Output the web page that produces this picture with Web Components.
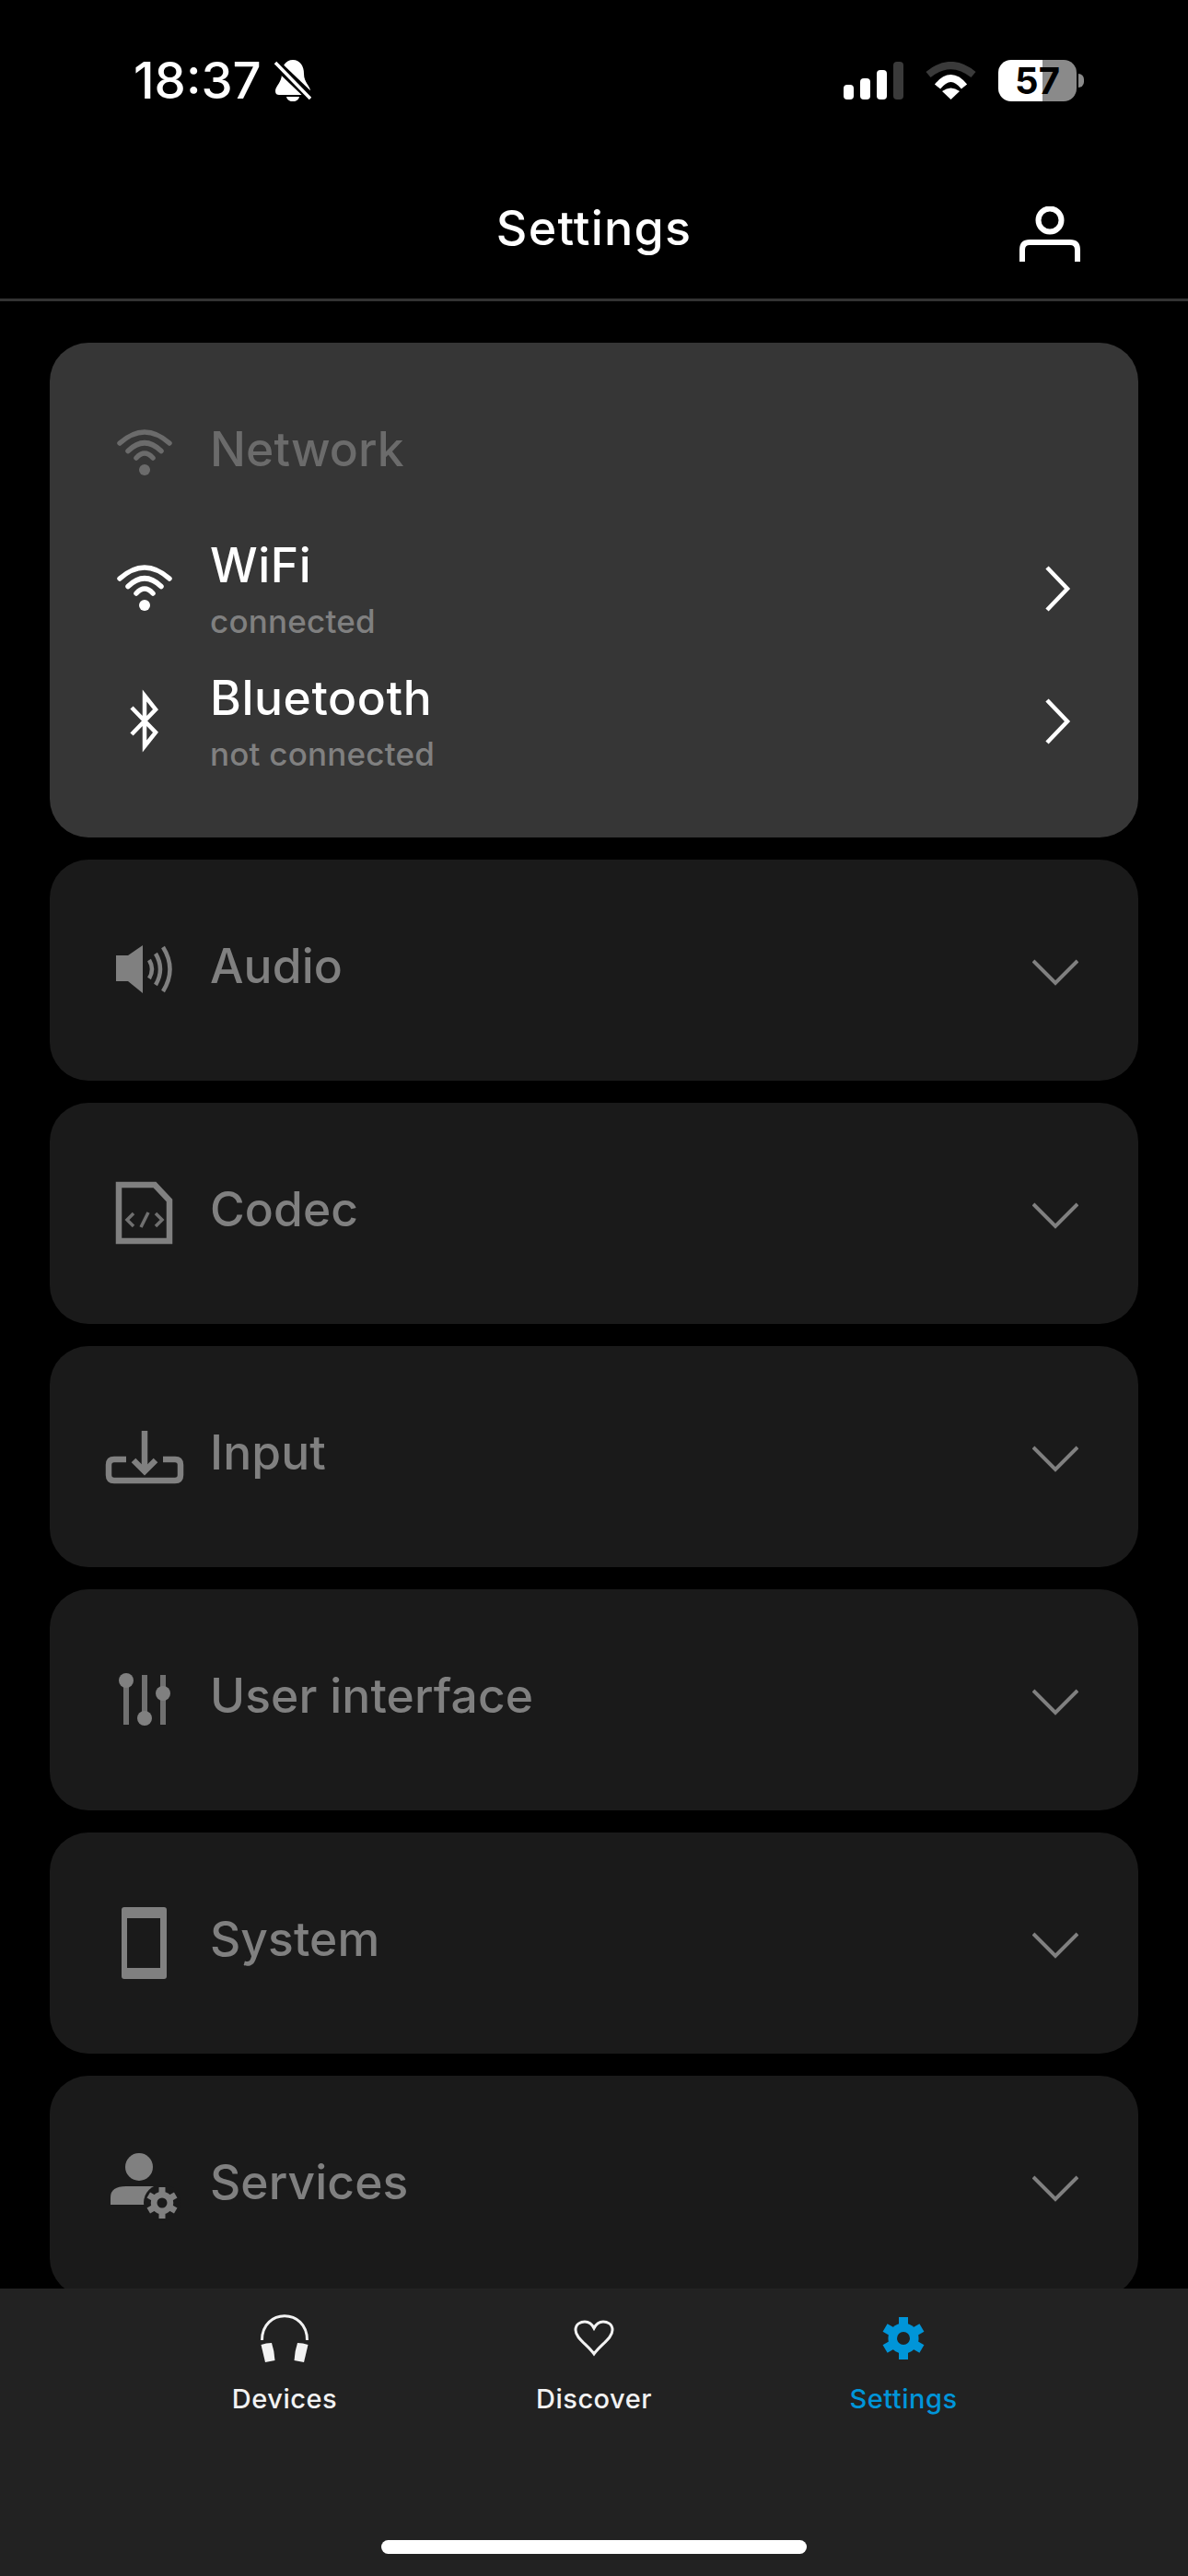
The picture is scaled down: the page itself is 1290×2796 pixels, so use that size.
<!DOCTYPE html>
<html lang="en">
<head>
<meta charset="utf-8">
<title>Settings</title>
<style>
  html, body { margin: 0; background: #000; }
  body { width: 1290px; height: 2796px; overflow: hidden; position: relative; font-family: Inter, "Noto Sans", sans-serif; color: #fff; }
</style>
</head>
<body>

<status-bar></status-bar>
<app-header>Settings</app-header>

<settings-list>
  <settings-card label="Network" open icon="wifi">
    <settings-row title="WiFi" status="connected" icon="wifi"></settings-row>
    <settings-row title="Bluetooth" status="not connected" icon="bluetooth"></settings-row>
  </settings-card>
  <settings-card label="Audio" icon="audio"></settings-card>
  <settings-card label="Codec" icon="codec"></settings-card>
  <settings-card label="Input" icon="input"></settings-card>
  <settings-card label="User interface" icon="sliders"></settings-card>
  <settings-card label="System" icon="system"></settings-card>
  <settings-card label="Services" icon="services"></settings-card>
</settings-list>

<tab-bar>
  <tab-item label="Devices" icon="headphones"></tab-item>
  <tab-item label="Discover" icon="heart"></tab-item>
  <tab-item label="Settings" icon="gear" active></tab-item>
</tab-bar>

<script>
  // gear: six teeth through a ring, hole on top in the colour behind it
  const gear = (x, y, tooth, toothW, hole, holeFill) => `
    <g transform="translate(${x} ${y})" fill="currentColor">
      <circle r="${tooth * 0.72}"/>
      <rect x="${-toothW / 2}" y="${-tooth}" width="${toothW}" height="${tooth * 2}"/>
      <rect x="${-toothW / 2}" y="${-tooth}" width="${toothW}" height="${tooth * 2}" transform="rotate(60)"/>
      <rect x="${-toothW / 2}" y="${-tooth}" width="${toothW}" height="${tooth * 2}" transform="rotate(120)"/>
      <circle r="${hole}" fill="${holeFill}"/>
    </g>`

  // all of these are drawn in a 100x100 box
  const ICONS = {
    wifi: `<g fill="none" stroke="currentColor" stroke-width="5.5" stroke-linecap="round">
        <path d="M23 39Q50 15 77 39"/><path d="M32 47.5Q50 30 68 47.5"/><path d="M41 55Q50 45 59 55"/></g>
        <circle cx="50" cy="68" r="6" fill="currentColor"/>`,
    bluetooth: `<path d="M36 35L62 62L50 77V22L62 37L36 64" fill="none" stroke="currentColor" stroke-width="4.5"/>`,
    audio: `<path d="M19 34H32L48 23V75L32 62H19Z" fill="currentColor"/>
        <g fill="none" stroke="currentColor" stroke-width="4.5">
        <path d="M55 39Q61 49 55 59"/><path d="M62 32Q72 49 62 66"/><path d="M70 25Q85 49 70 73"/></g>`,
    codec: `<path d="M22 19H61L77 36V80H22Z" fill="none" stroke="currentColor" stroke-width="6.5"/>
        <g fill="none" stroke="currentColor" stroke-width="3.5" opacity=".85">
        <path d="M38 50L31 57L38 64"/><path d="M62 50L69 57L62 64"/><path d="M54 49L46 65"/></g>`,
    input: `<g fill="none" stroke="currentColor" stroke-width="6.5">
        <path d="M30 53H17Q11 53 11 59V70Q11 76 17 76H83Q89 76 89 70V59Q89 53 83 53H70"/>
        <path d="M50 22V64"/><path d="M38 54L50 66L62 54"/></g>`,
    sliders: `<g stroke="currentColor" stroke-width="6" opacity=".85"><path d="M30 23V77M50 23V77M70 23V77"/></g>
        <g fill="currentColor"><circle cx="30" cy="29" r="8"/><circle cx="50" cy="70" r="8"/><circle cx="70" cy="43" r="8"/></g>`,
    system: `<path fill-rule="evenodd" fill="currentColor" d="M28 11H71Q74 11 74 14V86Q74 89 71 89H28Q25 89 25 86V14Q25 11 28 11ZM31 23V77H67V23Z"/>`,
    services: `<g fill="currentColor"><circle cx="44" cy="29" r="15"/>
        <path d="M13 70V62Q13 50 30 50H58Q66 50 66 56V70Z"/></g>
        <circle cx="69" cy="68" r="20" fill="#1a1a1a"/>${gear(69, 68, 17, 7, 5.5, '#1a1a1a')}`,
  }

  const TAB_ICONS = {
    headphones: `<svg width="54" height="52" viewBox="0 0 54 52" fill="#f2f2f2">
        <path d="M2.5 28C2.5-7 51.500-7 51.500 28" fill="none" stroke="#f2f2f2" stroke-width="3"/>
        <path d="M1.500 33Q7 31 13 31Q16 40 16.500 50L6 52Z"/><path d="M52.500 33Q47 31 41 31Q38 40 37.500 50L48 52Z"/></svg>`,
    heart: `<svg width="46" height="40" viewBox="0 0 46 40"><path d="M23 37C16 27 3 20 3 11C3 4 9 2 13 2C18 2 21 5 23 9C25 5 28 2 33 2C37 2 43 4 43 11C43 20 30 27 23 37Z" fill="none" stroke="#f2f2f2" stroke-width="3"/></svg>`,
    gear: `<svg width="46" height="46" viewBox="0 0 46 46" style="color:#0095d9">${gear(23, 23, 23, 10, 7, '#222')}</svg>`,
  }

  const statusTemplate = document.createElement('template')
  statusTemplate.innerHTML = `
    <style>
      :host { display: flex; justify-content: space-between; align-items: center; height: 130px; padding: 44px 113px 0 145px; box-sizing: border-box; }
      .left, .right { display: flex; align-items: center; }
      .left { gap: 14px; }
      .right { gap: 23px; }
      .time { font: 500 54.500px/60px Inter, sans-serif; color: #fff; }
      svg { display: block; }
      .battery { display: flex; align-items: center; gap: 2px; }
      .cell { width: 85px; height: 45px; border-radius: 14px; background: linear-gradient(90deg, #fff 56.5%, #8a8a8a 56.5%); display: flex; align-items: center; justify-content: center; font: 700 40px/45px Inter, sans-serif; color: #000; }
      .nub { width: 6px; height: 15px; border-radius: 0 6px 6px 0; background: #8a8a8a; }
    </style>
    <div class="left">
      <span class="time">18:37</span>
      <svg width="40" height="46" viewBox="0 0 40 46">
        <path fill="#fff" d="M20 1C12 1 8 8 8 16C8 26 1 29 1 35C1 38 3 39 5 39H35C37 39 39 38 39 35C39 29 32 26 32 16C32 8 28 1 20 1Z"/>
        <path fill="#fff" d="M13 41H27C26 48 14 48 13 41Z"/>
        <path d="M-1 3L41 43" stroke="#000" stroke-width="10"/>
        <path d="M1 4L39 43" stroke="#fff" stroke-width="3.5"/>
      </svg>
    </div>
    <div class="right">
      <svg width="65" height="41" viewBox="0 0 65 41">
        <rect x="0" y="25" width="11" height="16" rx="4" fill="#fff"/>
        <rect x="18" y="18" width="11" height="23" rx="4" fill="#fff"/>
        <rect x="36" y="9" width="11" height="32" rx="4" fill="#fff"/>
        <rect x="54" y="0" width="11" height="41" rx="4" fill="#3a3a3a"/>
      </svg>
      <svg width="57" height="41" viewBox="0 0 57 41">
        <path d="M4 14Q28.500-6 53 14" fill="none" stroke="#3a3a3a" stroke-width="8"/>
        <path d="M14 27Q28.500 9 43 27" fill="none" stroke="#fff" stroke-width="8"/>
        <path d="M28.500 41L19 32Q28.500 25 38 32Z" fill="#fff"/>
      </svg>
      <div class="battery"><div class="cell">57</div><div class="nub"></div></div>
    </div>
  `

  class StatusBar extends HTMLElement {
    constructor() {
      super()
      this.attachShadow({ mode: 'open' }).appendChild(statusTemplate.content.cloneNode(true))
    }
  }
  customElements.define('status-bar', StatusBar)

  const headerTemplate = document.createElement('template')
  headerTemplate.innerHTML = `
    <style>
      :host { display: grid; grid-template-columns: 1fr auto 1fr; align-items: start; height: 197px; box-sizing: border-box; padding: 88px 117px 0 117px; border-bottom: 3px solid #333; }
      .title { grid-column: 2; font: 500 52px/60px Inter, sans-serif; color: #fff; letter-spacing: 1.2px; }
      svg { justify-self: end; display: block; margin-top: 6px; }
    </style>
    <div class="title"><slot></slot></div>
    <svg width="66" height="60" viewBox="0 0 66 60" fill="none" stroke="#fff" stroke-width="6">
      <circle cx="33" cy="15" r="12.500"/>
      <path d="M3 60V47Q3 39 11 39H55Q63 39 63 47V60"/>
    </svg>
  `

  class AppHeader extends HTMLElement {
    constructor() {
      super()
      this.attachShadow({ mode: 'open' }).appendChild(headerTemplate.content.cloneNode(true))
    }
  }
  customElements.define('app-header', AppHeader)

  const listTemplate = document.createElement('template')
  listTemplate.innerHTML = `
    <style>
      :host { display: flex; flex-direction: column; gap: 24px; padding: 45px 54px 0; }
    </style>
    <slot></slot>
  `

  class SettingsList extends HTMLElement {
    constructor() {
      super()
      this.attachShadow({ mode: 'open' }).appendChild(listTemplate.content.cloneNode(true))
    }
  }
  customElements.define('settings-list', SettingsList)

  const cardTemplate = document.createElement('template')
  cardTemplate.innerHTML = `
    <style>
      :host { display: block; box-sizing: border-box; min-height: 240px; border-radius: 42px; background: #1a1a1a; padding: 70px 65px 0 53px; color: #808080; }
      :host([open]) { background: #363636; color: #6b6b6b; padding-bottom: 71px; }
      .head { display: flex; align-items: center; gap: 21px; height: 100px; }
      .icon { width: 100px; height: 100px; flex: none; display: block; }
      .label { flex: 1; font: 500 51.500px/60px Inter, sans-serif; letter-spacing: .1px; padding-bottom: 11px; }
      .chev { flex: none; display: block; margin-top: 6px; }
      :host([open]) .chev { display: none; }
      .rows { display: flex; flex-direction: column; gap: 34px; margin-top: 42px; }
    </style>
    <div class="head">
      <svg class="icon" viewBox="0 0 100 100"></svg>
      <span class="label"></span>
      <svg class="chev" width="50" height="30" viewBox="0 0 50 30" fill="none" stroke="#808080" stroke-width="4"><path d="M1 2L25 26L49 2"/></svg>
    </div>
    <div class="rows"><slot></slot></div>
  `

  class SettingsCard extends HTMLElement {
    constructor() {
      super()
      const root = this.attachShadow({ mode: 'open' })
      root.appendChild(cardTemplate.content.cloneNode(true))
      root.querySelector('.label').textContent = this.getAttribute('label')
      root.querySelector('.icon').innerHTML = ICONS[this.getAttribute('icon')]
    }
  }
  customElements.define('settings-card', SettingsCard)

  const rowTemplate = document.createElement('template')
  rowTemplate.innerHTML = `
    <style>
      :host { display: flex; align-items: center; gap: 21px; height: 110px; color: #fff; }
      .icon { width: 100px; height: 100px; flex: none; display: block; }
      .text { flex: 1; align-self: flex-start; }
      .title { font: 500 51.500px/60px Inter, sans-serif; letter-spacing: .6px; color: #fff; margin-top: -1px; }
      .status { font: 500 35px/62px Inter, sans-serif; letter-spacing: .2px; color: #808080; }
      .chev { flex: none; display: block; margin-right: -3px; }
    </style>
    <svg class="icon" viewBox="0 0 100 100"></svg>
    <div class="text"><div class="title"></div><div class="status"></div></div>
    <svg class="chev" width="50" height="50" viewBox="0 0 50 50" fill="none" stroke="#fff" stroke-width="4.500"><path d="M13 2L35 25L13 48"/></svg>
  `

  class SettingsRow extends HTMLElement {
    constructor() {
      super()
      const root = this.attachShadow({ mode: 'open' })
      root.appendChild(rowTemplate.content.cloneNode(true))
      root.querySelector('.title').textContent = this.getAttribute('title')
      root.querySelector('.status').textContent = this.getAttribute('status')
      root.querySelector('.icon').innerHTML = ICONS[this.getAttribute('icon')]
    }
  }
  customElements.define('settings-row', SettingsRow)

  const tabBarTemplate = document.createElement('template')
  tabBarTemplate.innerHTML = `
    <style>
      /* sits over the list, the last card runs under it */
      :host { position: absolute; left: 0; right: 0; bottom: 0; height: 312px; box-sizing: border-box; background: #222; display: block; }
      .tabs { display: grid; grid-template-columns: repeat(3, 336px); justify-content: center; padding-top: 26px; }
      .home { position: absolute; left: 414px; bottom: 24px; width: 462px; height: 15px; border-radius: 8px; background: #fff; }
    </style>
    <div class="tabs"><slot></slot></div>
    <div class="home"></div>
  `

  class TabBar extends HTMLElement {
    constructor() {
      super()
      this.attachShadow({ mode: 'open' }).appendChild(tabBarTemplate.content.cloneNode(true))
    }
  }
  customElements.define('tab-bar', TabBar)

  const tabTemplate = document.createElement('template')
  tabTemplate.innerHTML = `
    <style>
      :host { display: flex; flex-direction: column; align-items: center; color: #f2f2f2; }
      :host([active]) { color: #0095d9; }
      .ico { height: 56px; display: flex; align-items: center; justify-content: center; }
      svg { display: block; }
      .label { font: 500 29px/36px Inter, sans-serif; margin-top: 20px; letter-spacing: .5px; }
    </style>
    <div class="ico"></div>
    <div class="label"></div>
  `

  class TabItem extends HTMLElement {
    constructor() {
      super()
      const root = this.attachShadow({ mode: 'open' })
      root.appendChild(tabTemplate.content.cloneNode(true))
      root.querySelector('.ico').innerHTML = TAB_ICONS[this.getAttribute('icon')]
      root.querySelector('.label').textContent = this.getAttribute('label')
    }
  }
  customElements.define('tab-item', TabItem)
</script>
</body>
</html>
